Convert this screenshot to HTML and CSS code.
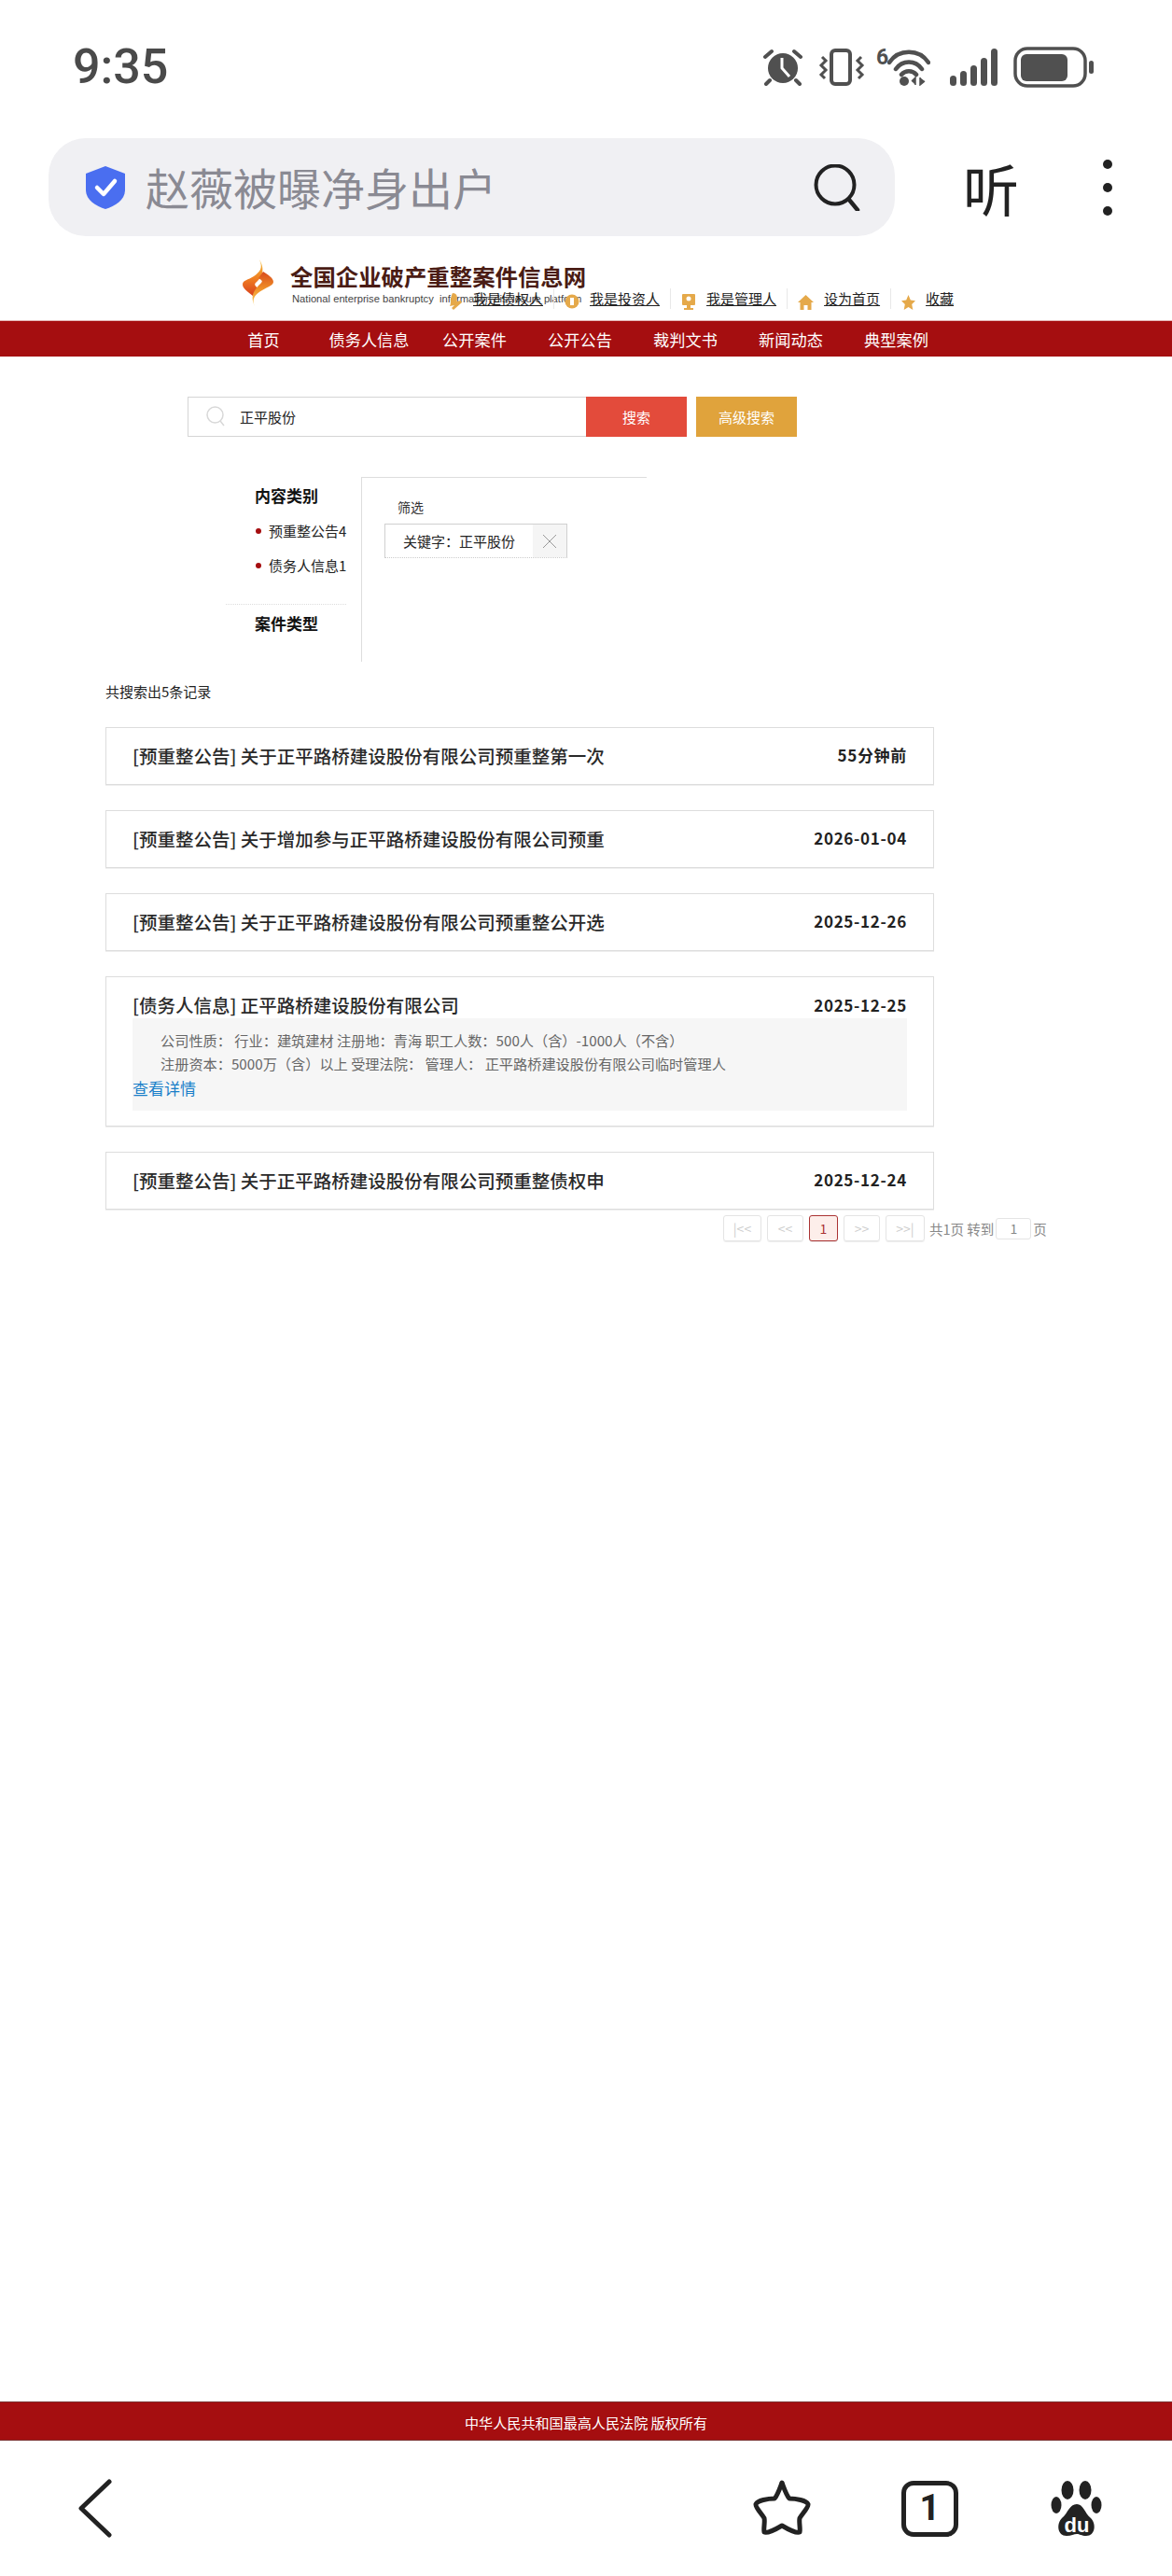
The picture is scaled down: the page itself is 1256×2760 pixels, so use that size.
FILE: index.html
```html
<!DOCTYPE html>
<html>
<head>
    <meta charset="utf-8">
    <title>全国企业破产重整案件信息网</title>
    <link rel="stylesheet" href="styles.css">
</head>
<body>
    <div class="phone">
        <div class="status-bar">
            <span class="time">9:35</span>
            <div class="status-icons">
                <svg width="42" height="40" viewBox="0 0 42 40" class="ic-alarm">
                    <circle cx="21" cy="21" r="16" fill="#505050"/>
                    <path d="M20 10V21L28 30" fill="none" stroke="#fff" stroke-width="3"/>
                    <path d="M2 9L9 3M40 9L33 3M7 34L3 38M35 34L39 38" stroke="#505050" stroke-width="4" stroke-linecap="round"/>
                </svg>
                <svg width="50" height="40" viewBox="0 0 50 40" class="ic-vibrate">
                    <rect x="14" y="2" width="20" height="36" rx="4" fill="none" stroke="#505050" stroke-width="4"/>
                    <path d="M4 9L8 13L3 18L8 23L3 28L7 32M46 9L42 13L47 18L42 23L47 28L43 32" fill="none" stroke="#505050" stroke-width="3"/>
                </svg>
                <div class="wifi">
                    <span class="wifi-six">6</span>
                    <svg width="46" height="40" viewBox="0 0 46 40">
                        <path d="M2 15C12 0 34 0 44 15M9 22C16 12 30 12 37 22M15 28C19 23 27 23 31 28" fill="none" stroke="#505050" stroke-width="4.5" stroke-linecap="round"/>
                        <circle cx="18" cy="35" r="5" fill="#505050"/>
                        <path d="M30 39V31L26 35M35 31V39L40 35" fill="#505050" stroke="#505050" stroke-width="1.5"/>
                    </svg>
                </div>
                <svg width="51" height="40" viewBox="0 0 51 40" class="ic-signal">
                    <rect x="0" y="29" width="7" height="11" rx="3.5" fill="#505050"/>
                    <rect x="11" y="24" width="7" height="16" rx="3.5" fill="#505050"/>
                    <rect x="22" y="18" width="7" height="22" rx="3.5" fill="#505050"/>
                    <rect x="33" y="10" width="7" height="30" rx="3.5" fill="#505050"/>
                    <rect x="44" y="0" width="7" height="40" rx="3.5" fill="#505050"/>
                </svg>
                <svg width="86" height="44" viewBox="0 0 86 44" class="ic-battery">
                    <rect x="2" y="2" width="75" height="40" rx="13" fill="none" stroke="#505050" stroke-width="3.5"/>
                    <rect x="8" y="8" width="50" height="29" rx="6" fill="#505050"/>
                    <rect x="81" y="15" width="5" height="14" rx="2.5" fill="#505050"/>
                </svg>
            </div>
        </div>

        <div class="browser-bar">
            <div class="address">
                <svg width="46" height="48" viewBox="0 0 46 48">
                    <path d="M23 1L44 9V27C44 37 33 44 23 47C13 44 2 37 2 27V9Z" fill="#4a6ef0"/>
                    <path d="M14 24L21 31L33 17" fill="none" stroke="#fff" stroke-width="4.5" stroke-linecap="round" stroke-linejoin="round"/>
                </svg>
                <span class="address-text">赵薇被曝净身出户</span>
                <svg width="50" height="50" viewBox="0 0 50 50" class="address-search">
                    <circle cx="23" cy="22" r="20.5" fill="none" stroke="#222" stroke-width="4"/>
                    <path d="M38 38L47 49" stroke="#222" stroke-width="4.5" stroke-linecap="round"/>
                </svg>
            </div>
            <span class="listen">听</span>
            <div class="more"><i></i><i></i><i></i></div>
        </div>

        <div class="page">
            <div class="header">
                <div class="logo">
                    <svg width="33" height="50" viewBox="0 0 33 50">
                        <defs>
                            <linearGradient id="flameA" x1="0" y1="0" x2="0" y2="1">
                                <stop offset="0" stop-color="#f7c23c"/>
                                <stop offset="0.55" stop-color="#ee7b22"/>
                                <stop offset="1" stop-color="#d8401c"/>
                            </linearGradient>
                            <linearGradient id="flameB" x1="0" y1="1" x2="0" y2="0">
                                <stop offset="0" stop-color="#f9d060"/>
                                <stop offset="0.5" stop-color="#f09028"/>
                                <stop offset="1" stop-color="#d84a1c"/>
                            </linearGradient>
                        </defs>
                        <path d="M18 0C22 9 19 13 12 18C6 22 0 22 0 27C0 31 6 35 11 39L17 31C14 29 12 27 14 25C20 20 25 12 18 0Z" fill="url(#flameA)"/>
                        <path d="M13 50C9 42 14 37 21 33C27 29 33 28 33 24C33 20 27 16 22 13L17 20C20 22 22 23 20 25C14 31 7 38 13 50Z" fill="url(#flameB)"/>
                    </svg>
                    <div class="logo-text">
                        <div class="logo-cn">全国企业破产重整案件信息网</div>
                        <div class="logo-en">National enterprise bankruptcy&nbsp; information disclosure platform</div>
                    </div>
                </div>
                <div class="top-links">
                    <a class="top-link">
                        <svg width="16" height="20" viewBox="0 0 16 20"><path d="M5 1C10 1 11 6 9 10L14 9L15 11L6 19L4 17L7 14L2 15C4 12 2 6 5 1Z" fill="#e5a94a"/></svg>
                        <span>我是债权人</span>
                    </a>
                    <a class="top-link">
                        <svg width="16" height="20" viewBox="0 0 16 20"><circle cx="8" cy="10" r="7.5" fill="#e5a94a"/><rect x="6" y="6" width="4" height="8" fill="#fff"/></svg>
                        <span>我是投资人</span>
                    </a>
                    <a class="top-link">
                        <svg width="16" height="20" viewBox="0 0 16 20"><rect x="1" y="2" width="14" height="12" rx="1" fill="#e5a94a"/><circle cx="8" cy="7" r="2.5" fill="#fff"/><rect x="6" y="14" width="4" height="3" fill="#e5a94a"/><rect x="3" y="17" width="10" height="2" fill="#e5a94a"/></svg>
                        <span>我是管理人</span>
                    </a>
                    <a class="top-link">
                        <svg width="17" height="20" viewBox="0 0 17 20"><path d="M8.5 3L17 11H14.5V19H10.5V14H6.5V19H2.5V11H0Z" fill="#e5a94a"/></svg>
                        <span>设为首页</span>
                    </a>
                    <a class="top-link">
                        <svg width="15" height="20" viewBox="0 0 15 20"><path d="M7.5 3L9.8 8.6L15 9.2L11.2 13L12.3 19L7.5 16L2.7 19L3.8 13L0 9.2L5.2 8.6Z" fill="#e5a94a"/></svg>
                        <span>收藏</span>
                    </a>
                </div>
            </div>

            <div class="nav">
                <a>首页</a>
                <a>债务人信息</a>
                <a>公开案件</a>
                <a>公开公告</a>
                <a>裁判文书</a>
                <a>新闻动态</a>
                <a>典型案例</a>
            </div>

            <div class="search-row">
                <div class="search-box">
                    <svg width="20" height="22" viewBox="0 0 20 22">
                        <circle cx="9.5" cy="9.5" r="8.5" fill="none" stroke="#d8d8d8" stroke-width="1.5"/>
                        <path d="M15 16L19 21" stroke="#d8d8d8" stroke-width="1.5"/>
                    </svg>
                    <span>正平股份</span>
                </div>
                <a class="btn btn-search">搜索</a>
                <a class="btn btn-advanced">高级搜索</a>
            </div>

            <div class="filter">
                <div class="filter-side">
                    <div class="side-title">内容类别</div>
                    <div class="side-item">预重整公告4</div>
                    <div class="side-item">债务人信息1</div>
                    <div class="side-line"></div>
                    <div class="side-title">案件类型</div>
                </div>
                <div class="filter-panel">
                    <div class="panel-title">筛选</div>
                    <div class="tag">
                        <span class="tag-text">关键字：正平股份</span>
                        <span class="tag-close">
                            <svg width="16" height="16" viewBox="0 0 16 16"><path d="M1 1L15 15M15 1L1 15" stroke="#999" stroke-width="1"/></svg>
                        </span>
                    </div>
                </div>
            </div>

            <div class="result-count">共搜索出5条记录</div>

            <div class="results">
                <div class="card">
                    <div class="card-head"><span class="card-title">[预重整公告] 关于正平路桥建设股份有限公司预重整第一次</span><span class="card-date">55分钟前</span></div>
                </div>
                <div class="card">
                    <div class="card-head"><span class="card-title">[预重整公告] 关于增加参与正平路桥建设股份有限公司预重</span><span class="card-date">2026-01-04</span></div>
                </div>
                <div class="card">
                    <div class="card-head"><span class="card-title">[预重整公告] 关于正平路桥建设股份有限公司预重整公开选</span><span class="card-date">2025-12-26</span></div>
                </div>
                <div class="card card-detail">
                    <div class="card-head"><span class="card-title">[债务人信息] 正平路桥建设股份有限公司</span><span class="card-date">2025-12-25</span></div>
                    <div class="card-info">
                        <div class="info-line">公司性质： 行业：建筑建材 注册地：青海 职工人数：500人（含）-1000人（不含）</div>
                        <div class="info-line">注册资本：5000万（含）以上 受理法院： 管理人： 正平路桥建设股份有限公司临时管理人</div>
                        <a class="info-link">查看详情</a>
                    </div>
                </div>
                <div class="card">
                    <div class="card-head"><span class="card-title">[预重整公告] 关于正平路桥建设股份有限公司预重整债权申</span><span class="card-date">2025-12-24</span></div>
                </div>
            </div>

            <div class="pager">
                <a class="pg pg-first">|&lt;&lt;</a>
                <a class="pg pg-prev">&lt;&lt;</a>
                <a class="pg pg-current">1</a>
                <a class="pg pg-next">&gt;&gt;</a>
                <a class="pg pg-last">&gt;&gt;|</a>
                <span class="pg-text">共1页 转到</span>
                <span class="pg-input">1</span>
                <span class="pg-text">页</span>
            </div>

            <div class="footer">中华人民共和国最高人民法院 版权所有</div>
        </div>

        <div class="bottom-bar">
            <svg width="37" height="63" viewBox="0 0 37 63" class="bb-back">
                <path d="M34 3L4 31.5L34 60" fill="none" stroke="#222" stroke-width="5" stroke-linecap="round" stroke-linejoin="round"/>
            </svg>
            <svg width="64" height="62" viewBox="0 0 64 62" class="bb-star">
                <path d="M32 4C35 12 37 18 40 21C47 21 58 23 60 27C61 30 54 37 51 42C50 46 52 54 51 57C48 59 37 53 32 50C27 53 16 59 13 57C12 54 14 46 13 42C10 37 3 30 4 27C6 23 17 21 24 21C27 18 29 12 32 4Z" fill="none" stroke="#222" stroke-width="5" stroke-linejoin="round"/>
            </svg>
            <div class="bb-tabs">1</div>
            <svg width="56" height="60" viewBox="0 0 56 60" class="bb-paw">
                <ellipse cx="18" cy="10" rx="6.5" ry="10" fill="#222"/>
                <ellipse cx="37" cy="10" rx="6.5" ry="10" fill="#222"/>
                <ellipse cx="6" cy="26" rx="5.5" ry="9" fill="#222"/>
                <ellipse cx="49" cy="26" rx="5.5" ry="9" fill="#222"/>
                <path d="M28 25C35 25 36 34 43 40C49 46 48 59 38 59C33 59 31 57 28 57C25 57 22 59 17 59C7 59 6 46 12 40C19 34 20 25 28 25Z" fill="#222"/>
                <text x="28" y="55" class="paw-text" text-anchor="middle">du</text>
            </svg>
        </div>
    </div>
</body>
</html>
```

FILE: styles.css
```css
* {
    box-sizing: border-box;
}

html, body {
    margin: 0;
    padding: 0;
    background: #fff;
}

body {
    font-family: "Noto Sans CJK SC", "Noto Sans", sans-serif;
    color: #222;
}

a {
    color: inherit;
    text-decoration: none;
}

.phone {
    width: 1256px;
    height: 2760px;
    display: flex;
    flex-direction: column;
    overflow: hidden;
}

/* status bar */
.status-bar {
    height: 148px;
    padding: 50px 84px 0 78px;
    display: flex;
    justify-content: space-between;
    align-items: flex-start;
}

.time {
    font-family: Roboto, sans-serif;
    font-size: 52px;
    font-weight: 500;
    line-height: 44px;
    color: #4a4a4a;
}

.status-icons {
    display: flex;
    align-items: flex-start;
}

.ic-alarm {
    margin: 2px 17px 0 0;
}

.ic-vibrate {
    margin: 2px 12px 0 0;
}

.wifi {
    display: flex;
    margin: 2px 21px 0 0;
    width: 58px;
}

.wifi-six {
    width: 12px;
    font-family: Roboto, sans-serif;
    font-size: 23px;
    font-weight: 700;
    line-height: 20px;
    color: #505050;
}

.ic-signal {
    margin: 2px 17px 0 0;
}

/* browser bar */
.browser-bar {
    height: 105px;
    display: flex;
    align-items: center;
}

.address {
    width: 907px;
    height: 105px;
    margin-left: 52px;
    padding: 0 37px 0 38px;
    display: flex;
    align-items: center;
    background: #f0f0f3;
    border-radius: 40px;
}

.address-text {
    margin: -2px 0 0 20px;
    flex: 1;
    font-size: 47px;
    color: #8a8a93;
}

.listen {
    width: 60px;
    margin-left: 73px;
    font-size: 60px;
    line-height: 70px;
    color: #222;
}

.more {
    margin-left: 90px;
    height: 60px;
    display: flex;
    flex-direction: column;
    justify-content: space-between;
}

.more i {
    display: block;
    width: 10px;
    height: 10px;
    border-radius: 50%;
    background: #222;
}

/* web page */
.page {
    flex: 1;
    display: flex;
    flex-direction: column;
}

.header {
    position: relative;
    height: 90px;
    padding: 25px 0 0 260px;
}

.logo {
    display: flex;
}

.logo-text {
    margin-left: 18px;
}

.logo-cn {
    margin-top: 4px;
    font-size: 24.4px;
    font-weight: 700;
    line-height: 28px;
    color: #4a1c14;
    white-space: nowrap;
}

.logo-en {
    margin: 3px 0 0 2px;
    font-family: "Liberation Sans", sans-serif;
    font-size: 11.2px;
    line-height: 14px;
    color: #444;
    white-space: nowrap;
}

.top-links {
    position: absolute;
    left: 469px;
    top: 56px;
    display: flex;
}

.top-link {
    height: 22px;
    padding: 0 11px;
    display: flex;
    align-items: center;
    gap: 11px;
    border-left: 1px solid #e8e8e8;
}

.top-link:first-child {
    border-left: 0;
}

.top-link svg {
    margin-top: 6px;
}

.top-link span {
    font-size: 15px;
    line-height: 20px;
    color: #222;
    text-decoration: underline;
    white-space: nowrap;
}

.nav {
    height: 39px;
    padding-left: 226px;
    display: flex;
    align-items: center;
    background: #a50e10;
    border-top: 1px solid #e4b8b8;
}

.nav a {
    width: 113px;
    text-align: center;
    font-size: 17.2px;
    color: #fff;
}

/* search */
.search-row {
    margin: 43px 0 0 201px;
    height: 43px;
    display: flex;
}

.search-box {
    width: 427px;
    padding: 0 0 1px 19px;
    display: flex;
    align-items: center;
    border: 1px solid #d5d5d5;
    border-right: 0;
}

.search-box span {
    margin-left: 16px;
    font-size: 15px;
    color: #222;
}

.btn {
    display: flex;
    align-items: center;
    justify-content: center;
    font-size: 15px;
    color: #fff;
}

.btn-search {
    width: 108px;
    background: #e34b3b;
}

.btn-advanced {
    width: 108px;
    margin-left: 10px;
    background: #e0a33c;
}

/* filter */
.filter {
    margin: 43px 0 0 242px;
    height: 198px;
    display: flex;
}

.filter-side {
    width: 145px;
    padding-right: 16px;
}

.side-title {
    padding-left: 31px;
    margin-top: 8px;
    font-size: 17px;
    font-weight: 700;
    line-height: 24px;
    color: #111;
}

.side-item {
    position: relative;
    margin-left: 46px;
    font-size: 15px;
    line-height: 37px;
    white-space: nowrap;
    color: #222;
}

.side-title + .side-item {
    margin-top: 7px;
}

.side-item::before {
    content: "";
    position: absolute;
    left: -14px;
    top: 16px;
    width: 6px;
    height: 6px;
    border-radius: 50%;
    background: #a50e10;
}

.side-line {
    margin-top: 23px;
    border-top: 1px dotted #ddd;
}

.filter-panel {
    width: 306px;
    padding: 21px 0 0 24px;
    border-left: 1px solid #ddd;
    border-top: 1px solid #ddd;
}

.panel-title {
    margin-left: 14px;
    font-size: 14px;
    line-height: 20px;
    color: #333;
}

.tag {
    width: 196px;
    height: 37px;
    margin-top: 8px;
    display: flex;
    justify-content: space-between;
    border: 1px solid #d0d0d0;
    border-bottom: 1px dotted #ccc;
}

.tag-text {
    margin-left: 19px;
    font-size: 15px;
    line-height: 36px;
    white-space: nowrap;
}

.tag-close {
    width: 36px;
    display: flex;
    align-items: center;
    justify-content: center;
    background: #f5f5f5;
}

/* results */
.result-count {
    margin: 21px 0 0 113px;
    font-size: 15px;
    line-height: 22px;
    color: #222;
}

.results {
    margin: 27px 0 0 113px;
    width: 888px;
    display: flex;
    flex-direction: column;
    gap: 27px;
}

.card {
    height: 62px;
    padding: 0 28px;
    display: flex;
    flex-direction: column;
    justify-content: center;
    border: 1px solid #ddd;
    box-shadow: 0 1px 0 #eee;
}

.card-detail {
    height: 161px;
    padding-top: 17px;
    justify-content: flex-start;
}

.card-head {
    display: flex;
    justify-content: space-between;
    align-items: center;
    height: 27px;
}

.card-title {
    margin-top: -2px;
    font-size: 19.5px;
    font-weight: 500;
    color: #2a2a2a;
    white-space: nowrap;
}

.card-date {
    margin-top: -3px;
    font-size: 17px;
    font-weight: 700;
    letter-spacing: 0.7px;
    color: #222;
    white-space: nowrap;
}

.card-info {
    height: 99px;
    padding-top: 11px;
    background: #f6f6f6;
}

.info-line {
    padding-left: 30px;
    font-size: 15.2px;
    line-height: 25px;
    color: #666;
    white-space: nowrap;
}

.info-link {
    display: block;
    margin-top: 1px;
    font-size: 17px;
    line-height: 26px;
    color: #1a7fc9;
}

/* pager */
.pager {
    margin: 6px 0 0 775px;
    height: 28px;
    display: flex;
    align-items: center;
}

.pg {
    height: 28px;
    margin-right: 6px;
    display: flex;
    align-items: center;
    justify-content: center;
    font-size: 14px;
    color: #ccc;
    border: 1px solid #e4e4e4;
    border-radius: 3px;
    box-shadow: 0 1px 0 #eee;
}

.pg-first {
    width: 41px;
}

.pg-prev {
    width: 39px;
}

.pg-current {
    width: 31px;
    color: #a33;
    background: #fdeeea;
    border-color: #a33;
}

.pg-next {
    width: 39px;
}

.pg-last {
    width: 42px;
    margin-right: 5px;
}

.pg-text {
    font-size: 14.5px;
    color: #888;
    white-space: nowrap;
}

.pg-input {
    width: 38px;
    height: 23px;
    margin: 0 2px;
    font-size: 14px;
    line-height: 21px;
    text-align: center;
    color: #888;
    border: 1px solid #e4e4e4;
    border-radius: 3px;
}

.footer {
    height: 42px;
    margin-top: auto;
    margin-bottom: 26px;
    font-size: 15.1px;
    line-height: 42px;
    text-align: center;
    color: #fff;
    background: #a50e10;
    border-top: 1px solid #7a3030;
    border-bottom: 1px solid #7a3030;
}

/* bottom bar */
.bottom-bar {
    height: 119px;
    flex-shrink: 0;
    padding-top: 15px;
    display: flex;
    align-items: flex-start;
}

.bb-back {
    margin-left: 83px;
}

.bb-star {
    margin-left: 686px;
}

.bb-tabs {
    width: 61px;
    height: 60px;
    margin: 2px 0 0 96px;
    border: 5px solid #222;
    border-radius: 13px;
    font-family: Roboto, sans-serif;
    font-size: 38px;
    font-weight: 700;
    line-height: 48px;
    text-align: center;
    color: #222;
}

.bb-paw {
    margin: 2px 0 0 99px;
}

.paw-text {
    font-family: "Liberation Sans", sans-serif;
    font-size: 22px;
    font-weight: 700;
    fill: #fff;
}
```
